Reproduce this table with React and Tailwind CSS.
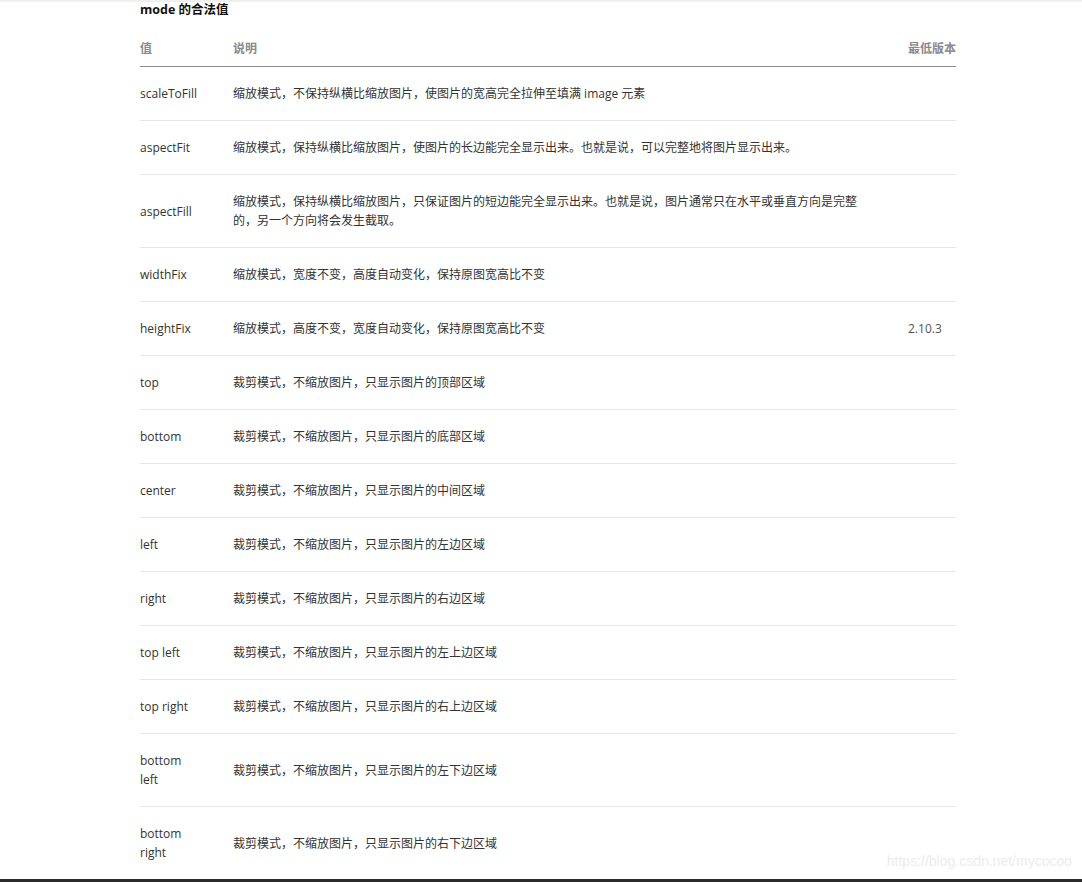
import React from 'react';

// mode 属性的合法值
const rows = [
  { value: 'scaleToFill', desc: '缩放模式，不保持纵横比缩放图片，使图片的宽高完全拉伸至填满 image 元素' },
  { value: 'aspectFit', desc: '缩放模式，保持纵横比缩放图片，使图片的长边能完全显示出来。也就是说，可以完整地将图片显示出来。' },
  { value: 'aspectFill', desc: '缩放模式，保持纵横比缩放图片，只保证图片的短边能完全显示出来。也就是说，图片通常只在水平或垂直方向是完整的，另一个方向将会发生截取。' },
  { value: 'widthFix', desc: '缩放模式，宽度不变，高度自动变化，保持原图宽高比不变' },
  { value: 'heightFix', desc: '缩放模式，高度不变，宽度自动变化，保持原图宽高比不变', version: '2.10.3' },
  { value: 'top', desc: '裁剪模式，不缩放图片，只显示图片的顶部区域' },
  { value: 'bottom', desc: '裁剪模式，不缩放图片，只显示图片的底部区域' },
  { value: 'center', desc: '裁剪模式，不缩放图片，只显示图片的中间区域' },
  { value: 'left', desc: '裁剪模式，不缩放图片，只显示图片的左边区域' },
  { value: 'right', desc: '裁剪模式，不缩放图片，只显示图片的右边区域' },
  { value: 'top left', desc: '裁剪模式，不缩放图片，只显示图片的左上边区域' },
  { value: 'top right', desc: '裁剪模式，不缩放图片，只显示图片的右上边区域' },
  { value: 'bottom\nleft', desc: '裁剪模式，不缩放图片，只显示图片的左下边区域' },
  { value: 'bottom\nright', desc: '裁剪模式，不缩放图片，只显示图片的右下边区域' },
];

export default function App() {
  return (
    <div className="relative h-[882px] overflow-hidden bg-white font-['Open_Sans','Noto_Sans_CJK_SC',sans-serif] text-[12px] text-[#333]">
      {/* 顶部细条 */}
      <div className="h-[2px] bg-[#f0f0f0]" />

      <div className="ml-[140px] w-[816px]">
        <div className="text-[12.5px] font-bold leading-[16px] text-[#111]">mode 的合法值</div>

        {/* 表头 */}
        <div className="flex border-b border-[#8c8c8c] pt-[21px] pb-[8px] leading-[19px] font-semibold text-[#8a8a8a]">
          <div className="w-[93px]">值</div>
          <div className="w-[675px]">说明</div>
          <div className="w-[48px] whitespace-nowrap">最低版本</div>
        </div>

        {/* 表格内容 */}
        {rows.map((r) => (
          <div key={r.value} className="flex items-center border-b border-[#e6e6e6] py-[17px] leading-[19px]">
            <div className="w-[93px] whitespace-pre-line">{r.value}</div>
            <div className="w-[675px] pr-[45px]">{r.desc}</div>
            <div className="w-[48px] text-[#555]">{r.version}</div>
          </div>
        ))}
      </div>

      {/* 水印 */}
      <div className="absolute right-[10px] bottom-[10px] font-['Liberation_Sans',sans-serif] text-[14px] text-[#ececec]">
        https://blog.csdn.net/mycocoo
      </div>

      {/* 底部窗口边 */}
      <div className="absolute inset-x-0 bottom-0 h-[3px] bg-[#2b2b2b]" />
    </div>
  );
}
